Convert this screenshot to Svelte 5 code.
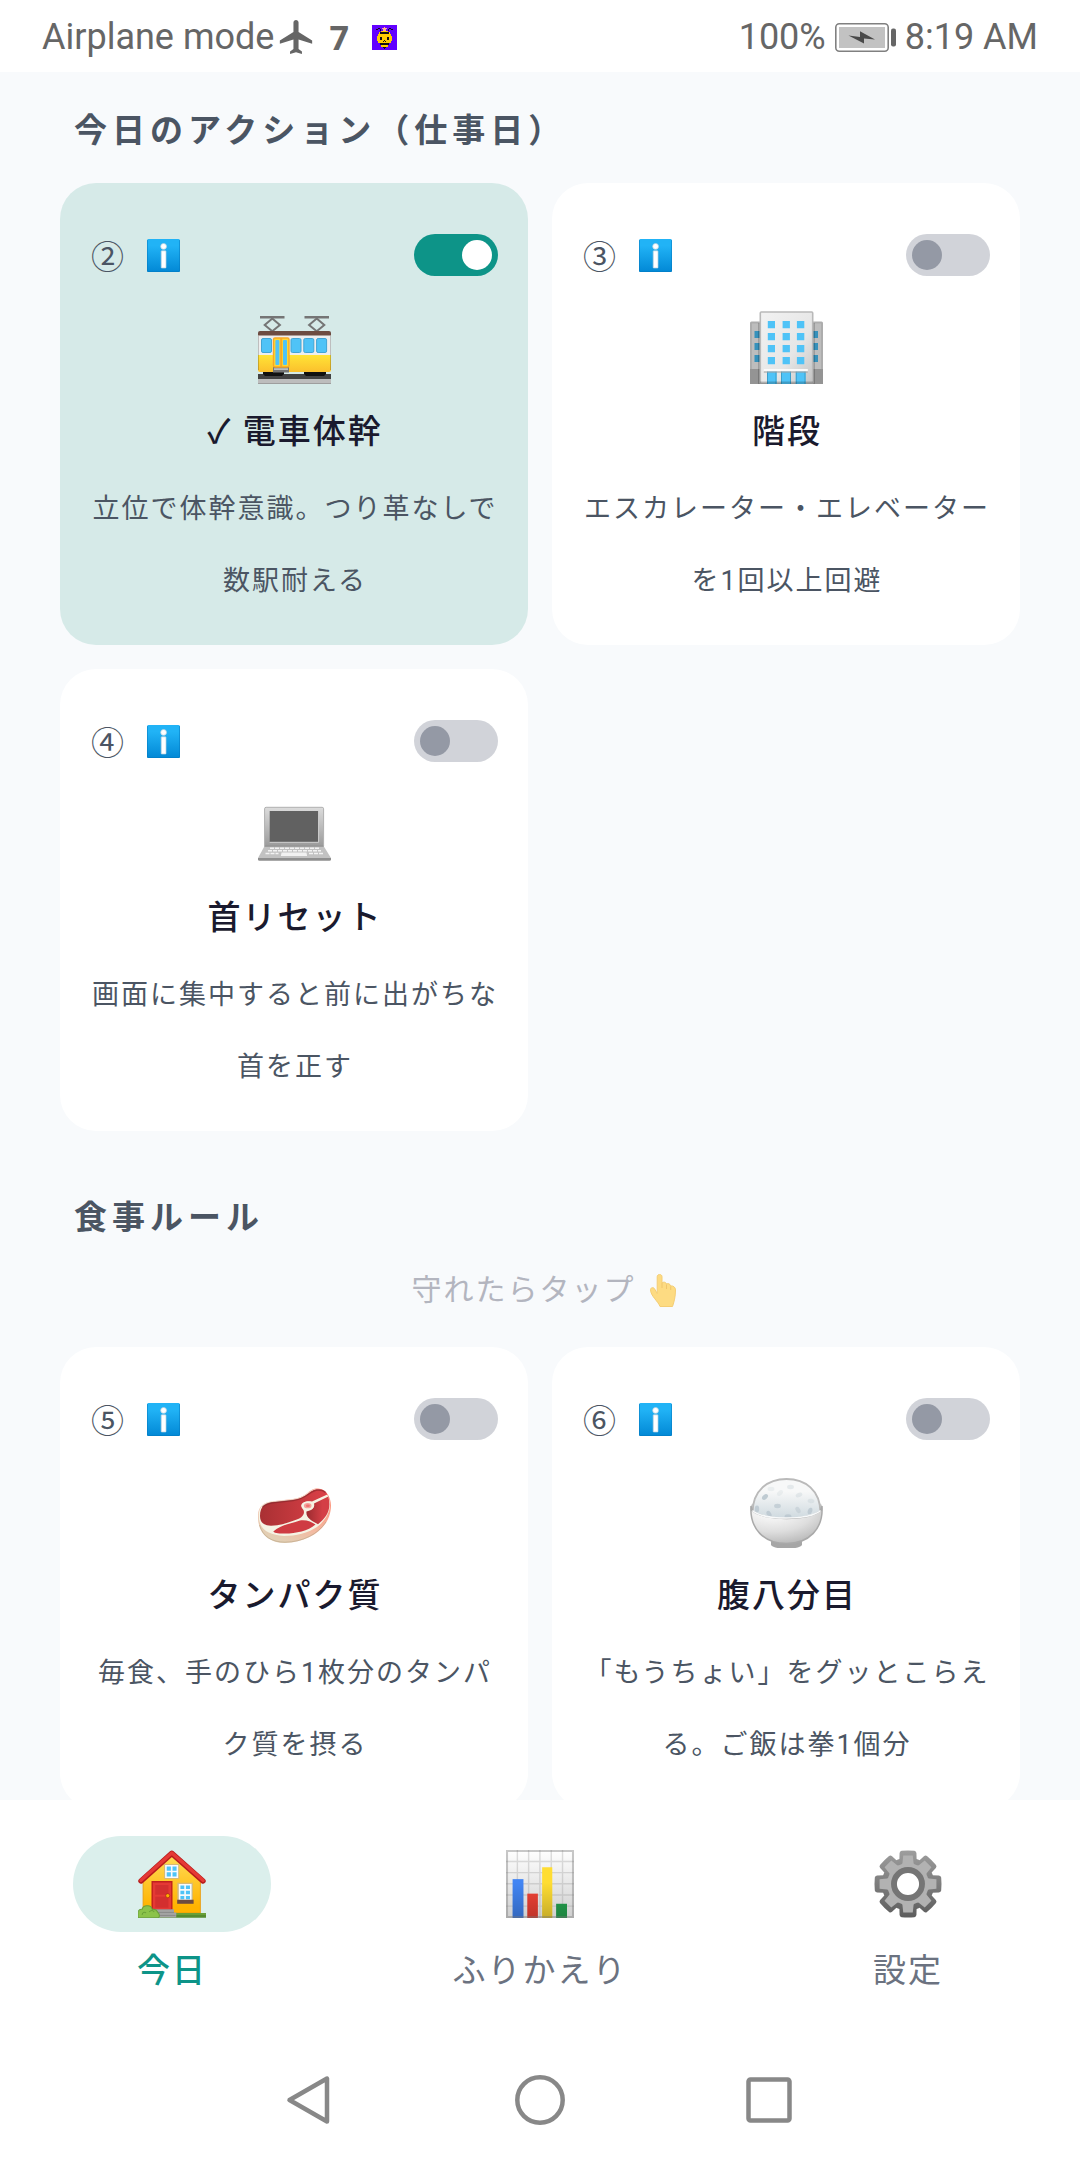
<script lang="ts">
	type Item = { no: string; icon: string; title: string; text: string; done: boolean };

	let actions = $state<Item[]>([
		{ no: '②', icon: 'train', title: '電車体幹', text: '立位で体幹意識。つり革なしで数駅耐える', done: true },
		{ no: '③', icon: 'building', title: '階段', text: 'エスカレーター・エレベーターを1回以上回避', done: false },
		{ no: '④', icon: 'laptop', title: '首リセット', text: '画面に集中すると前に出がちな首を正す', done: false }
	]);
	let meals = $state<Item[]>([
		{ no: '⑤', icon: 'meat', title: 'タンパク質', text: '毎食、手のひら1枚分のタンパク質を摂る', done: false },
		{ no: '⑥', icon: 'rice', title: '腹八分目', text: '「もうちょい」をグッとこらえる。ご飯は拳1個分', done: false }
	]);

	const tabs = [
		{ id: 'today', icon: 'house', label: '今日' },
		{ id: 'review', icon: 'chart', label: 'ふりかえり' },
		{ id: 'settings', icon: 'gear', label: '設定' }
	];
	let current = $state('today');

	// rice grains: x, y, rotation, opacity
	const grains = [
		[15, 22, -40, 0.9],
		[27.5, 31, 0, 0.7],
		[38, 41.5, 0, 0.8],
		[19, 39, 60, 0.8],
		[7, 34, 90, 0.8],
		[48, 35, 60, 0.5],
		[60, 36, -70, 0.8],
		[49, 20, -20, 0.3],
		[40.5, 12, 0, 0.3],
		[61, 26, 10, 0.3],
		[21, 14, 0, 0.2],
		[30, 18, -40, 0.2]
	];
	const teeth = [0, 45, 90, 135, 180, 225, 270, 315];
</script>

{#snippet icon(name: string)}
	{#if name === 'train'}
		<svg viewBox="0 0 73 73" aria-hidden="true">
			<defs>
				<linearGradient id="train-body" x2="0" y2="1">
					<stop offset="0" stop-color="#ffe436" />
					<stop offset="1" stop-color="#fbc02d" />
				</linearGradient>
			</defs>
			<g fill="none" stroke="#757575" stroke-width="2">
				<path d="M2 6.3h24.5M46.5 6.3H71" stroke-width="2.6" />
				<path d="M14.3 7.6l7.6 6.4-7.6 6.2L6.7 14zM58.7 7.6l7.6 6.4-7.6 6.2-7.6-6.2z" />
			</g>
			<path d="M0 63h73v5H0z" fill="#424242" />
			<path d="M0 68h73v5H0z" fill="#bdbdbd" />
			<path d="M0 72.5h73" stroke="#9e9e9e" />
			<path d="M5 60h21v3l-2 2H7l-2-2zM46 60h22v3l-2 2H48l-2-2z" fill="#111" />
			<path d="M0 24h73v21H0z" fill="#eee" />
			<path d="M0 44h73v15q0 2-2 2H2q-2 0-2-2z" fill="url(#train-body)" />
			<path d="M.5 25v34M72.5 25v34" stroke="#000" stroke-opacity=".2" />
			<path d="M0 24.5V22q0-2 2-2h69q2 0 2 2v2.5z" fill="#6d4c41" />
			<g fill="#4fc3f7" stroke="#42a5d5">
				<rect x="3.5" y="27.5" width="10" height="14" rx="1.5" />
				<rect x="33" y="27.5" width="10" height="14" rx="1.5" />
				<rect x="45.8" y="27.5" width="10" height="14" rx="1.5" />
				<rect x="58.6" y="27.5" width="10" height="14" rx="1.5" />
			</g>
			<path d="M15 55.5h16v6H15z" fill="#757575" />
			<path d="M16 57.2h14v1.8H16z" fill="#bdbdbd" />
			<rect x="15.5" y="27" width="15.5" height="29" rx="1.5" fill="#fdd835" stroke="#f9a825" stroke-width="1.4" />
			<path d="M23.2 27v29" stroke="#f9a825" stroke-width="2" />
			<rect x="17.4" y="29" width="4" height="25" rx="1" fill="#4fc3f7" />
			<rect x="25" y="29" width="4" height="25" rx="1" fill="#4fc3f7" />
		</svg>
	{:else if name === 'building'}
		<svg viewBox="0 0 73 73" aria-hidden="true">
			<defs>
				<linearGradient id="tower" x2="1" y2="1">
					<stop offset="0" stop-color="#f2f2f2" />
					<stop offset=".6" stop-color="#e6e6e6" />
					<stop offset="1" stop-color="#c4c4c4" />
				</linearGradient>
			</defs>
			<path d="M0 73V12q0-1.5 1.5-1.5h70q1.5 0 1.5 1.5v61z" fill="#adadad" />
			<path d="M2 58V12.5h8V58zM63 58V12.5h8V58z" fill="#bdbdbd" />
			<path d="M0 58h73v15H0z" fill="#949494" />
			<g fill="#3691bb">
				{#each [20, 32, 44] as y (y)}
					<path d="M4.5 {y}H10v7H4.5zM63 {y}h5v7h-5z" />
				{/each}
			</g>
			<path d="M8 12h2v61H8zM63 12h2v61h-2z" fill="#000" opacity=".18" />
			<rect x="10.3" y="1" width="52.4" height="71.6" rx="1" fill="url(#tower)" stroke="#b9b9b9" stroke-width="1.6" />
			<g fill="#4fc3f7">
				{#each [10, 22, 34, 46] as y (y)}
					<path d="M17.8 {y}H25v7.3h-7.2zM32.6 {y}h7.3v7.3h-7.3zM46.9 {y}h7.4v7.3h-7.4z" />
				{/each}
				<path d="M17 60h9.6v13H17zM31 60h10v13H31zM45.8 60h9.8v13h-9.8z" />
			</g>
			<path d="M17.5 60v13M26 60v13M31.5 60v13M40.5 60v13M46.3 60v13M55 60v13" stroke="#3b9fcb" />
			<path d="M10 70.6h53V73H10z" fill="#000" opacity=".2" />
			<path d="M13.8 58h44v2.6h-44z" fill="#fafafa" />
			<path d="M13.8 61h44" stroke="#9e9e9e" />
		</svg>
	{:else if name === 'laptop'}
		<svg viewBox="0 0 73 73" aria-hidden="true">
			<defs>
				<linearGradient id="lid" x2="0" y2="1">
					<stop offset="0" stop-color="#dcdcdc" />
					<stop offset="1" stop-color="#999" />
				</linearGradient>
			</defs>
			<rect x="6.6" y="10.3" width="59" height="40" rx="1.5" fill="url(#lid)" stroke="#b0b0b0" />
			<path d="M11.7 14h48.6v31H11.7z" fill="#616161" />
			<path d="M11.7 45.3h48.9V14" fill="none" stroke="#cfcfcf" />
			<path d="M6.6 49h59L73 61H0z" fill="#c2c2c2" />
			<path d="M6.6 49.2h59" stroke="#8d8d8d" />
			<path d="M12 51.3h49M10 53.8h53M7.5 56.6h13M51 56.6h14" stroke="#f3f3f3" stroke-width="1.5" stroke-dasharray="4 1" />
			<path d="M23.5 55.5h25l.6 3.5H22.9z" fill="#f1f1f1" />
			<path d="M0 61h73v1.5q0 1.2-1.5 1.2h-70Q0 63.7 0 62.5z" fill="#8f8f8f" />
		</svg>
	{:else if name === 'meat'}
		<svg viewBox="0 0 73 73" aria-hidden="true">
			<defs>
				<linearGradient id="fat" x1="1" y1="0" x2=".4" y2="1">
					<stop offset="0" stop-color="#ff8a73" />
					<stop offset=".6" stop-color="#f7b49c" />
					<stop offset="1" stop-color="#e3cfb4" />
				</linearGradient>
				<linearGradient id="flesh" x2="1" y2="0">
					<stop offset="0" stop-color="#a93033" />
					<stop offset="1" stop-color="#dc4148" />
				</linearGradient>
				<linearGradient id="flesh-dark" x2="1" y2="0">
					<stop offset="0" stop-color="#9c2b30" />
					<stop offset=".7" stop-color="#d43f46" />
				</linearGradient>
			</defs>
			<path d="M0 42C0 29 8 27 17 26l18-2c15-2 15-10.5 25-10.5 8 0 13 9 13 17C73 51 54 67 27 68 10 68 0 58 0 42z" fill="url(#fat)" />
			<path d="M1.5 50C5 62 14 67 27 67.2 45 67 60 59 68 47" fill="none" stroke="#b9a486" opacity=".6" />
			<path d="M.7 41C1 29 8 27 17 26.3l18-2C50 22 50 14 60 14c8 0 12 9 12 16 0 8-6 17-13 22-9 6-21 9-33 9C10 60 1 54 .7 41z" fill="#f5f3e4" />
			<path d="M2 41C2 30.5 8 27.6 17 27l18-2C50 23 51 14.3 60 14.3c5 0 8 2 9.3 5.200L54 26.500C49 25.500 43.500 27.500 43.500 31c0 2.500 2.500 3.500 2.500 6 0 4-4 7-10 8.500-8 3-15 5-23 5.200C6 50.700 2 47.500 2 41z" fill="url(#flesh)" />
			<path d="M4.500 32C8 28.300 12 28 17 27.500l18-2C50 23.500 52 15 60 15c4 0 6 1 7.500 2.500" fill="none" stroke="#7d2226" stroke-opacity=".55" stroke-width="1.4" />
			<path d="M70.300 21.500L56 28.500c1 4-2 7-7.500 8-.8 6 3.500 8.500 11.500 12.700C68 43 74 35 70.300 21.500z" fill="url(#flesh-dark)" />
			<path d="M15.300 56.500C22 50 32 49 42 45.500c6-1 12 1.500 15.500 4C50 56 38 58.500 27 58.500c-5 0-10 0-11.700-2z" fill="#cf3b42" />
			<ellipse cx="49.7" cy="30.7" rx="6.4" ry="4.2" fill="#f5f3e4" />
			<ellipse cx="49.7" cy="30.7" rx="3.8" ry="2.6" fill="#f5a19b" />
			<ellipse cx="49.9" cy="30.7" rx="2" ry="1.2" fill="#f0716f" />
		</svg>
	{:else if name === 'rice'}
		<svg viewBox="0 0 73 73" aria-hidden="true">
			<defs>
				<linearGradient id="dome" x2="0" y2="1">
					<stop offset=".3" stop-color="#f7f8f8" />
					<stop offset="1" stop-color="#cdd8de" />
				</linearGradient>
				<radialGradient id="bowl" cx=".3" cy=".1" r=".9">
					<stop offset=".1" stop-color="#fdfdfd" />
					<stop offset=".65" stop-color="#dedede" />
					<stop offset="1" stop-color="#bdbdbd" />
				</radialGradient>
			</defs>
			<path d="M21 66h31v4c-3 5-28 5-31 0z" fill="#a6a6a6" />
			<path d="M1 30l4-3 63 0 4 3-2 9H3z" fill="#d4d4d4" />
			<path d="M2.500 38C2.500 15 18 4 36.500 4S70.500 15 70.500 38C60 47 13 47 2.500 38z" fill="url(#dome)" stroke="#bababa" stroke-width="2" />
			{#each grains as [x, y, angle, opacity]}
				<ellipse cx={x} cy={y} rx="3.4" ry="2.2" fill="#b9c6ce" {opacity} transform="rotate({angle} {x} {y})" />
			{/each}
			<path d="M1 31C-.5 54 14 68.500 36.500 68.500S73.500 54 72 31l-1.500 4.500C60 46 13 46 2.500 35.500z" fill="url(#bowl)" stroke="#a9a9a9" stroke-width="1.5" />
			<path d="M2.500 35.500C13 45.500 60 45.500 70.500 35.500" fill="none" stroke="#f7f9fa" stroke-width="1.5" />
		</svg>
	{:else if name === 'house'}
		<svg viewBox="0 0 67 67" aria-hidden="true">
			<defs>
				<linearGradient id="wall" x2="0" y2="1">
					<stop offset=".1" stop-color="#ffd84f" />
					<stop offset=".9" stop-color="#ffb300" />
				</linearGradient>
			</defs>
			<path d="M5 62V30L33.300 4 61.500 30v32z" fill="url(#wall)" stroke="#e89a0c" stroke-width=".8" />
			<path d="M3 30.500L33.300 3.300 64 30.500" fill="none" stroke="#b71c1c" stroke-width="5.4" stroke-linecap="round" stroke-linejoin="round" />
			<path d="M3 29.800L33.300 3 64 29.800" fill="none" stroke="#e53935" stroke-width="3.4" stroke-linecap="round" stroke-linejoin="round" />
			<path d="M21 62h46v4.700H21z" fill="#558b2f" />
			<path d="M21 63h46" stroke="#7cb342" />
			<g fill="#4fc3f7" stroke="#fafafa" stroke-width="1.6">
				<path d="M26.500 14.500h13.300v13.300H26.500z" stroke="#d6b978" />
				<path d="M27.500 15.500h11.300v11.300H27.500zM33.200 15.500v11.300M27.500 21.200h11.300" />
				<path d="M39.500 33h13.800v16.500H39.500z" stroke="#d6b978" />
				<path d="M41 34.300h11v15H41zM46.400 34.300v15M41 39.300h11M41 44.500h11" />
			</g>
			<path d="M38.600 49h16.200v4H38.600z" fill="#6d4c41" />
			<path d="M14 31.300h19.300v27.500H14z" fill="#e53935" stroke="#c01f1f" stroke-width="1.4" />
			<path d="M17 34.500h13v9.500H17zM17 46h13v11H17z" fill="#d32f2f" />
			<circle cx="29.3" cy="45" r="2" fill="#ffb300" stroke="#a1230f" stroke-width=".6" />
			<path d="M15 58.500h20.500v3h2.200v5H15z" fill="#a3a3a3" />
			<path d="M15 61.500h20.500M15 64.500h22" stroke="#7f7f7f" stroke-width=".7" />
			<path d="M0 66.700V61q1-3 4-2.500 1-3.700 5-3.500 4-.5 5 3.500 4-.5 5.500 3 2.500 2 1 5.200z" fill="#8bc34a" stroke="#689f38" />
			<path d="M4 64q1-4 4-2M11 61q3-3 5 0" fill="none" stroke="#689f38" />
		</svg>
	{:else if name === 'chart'}
		<svg viewBox="0 0 67 67" aria-hidden="true">
			<defs>
				<linearGradient id="panel" x2="0" y2="1">
					<stop offset="0" stop-color="#fff" />
					<stop offset="1" stop-color="#cfcfcf" />
				</linearGradient>
				<linearGradient id="shade" x2="0" y2="1">
					<stop offset=".3" stop-opacity="0" />
					<stop offset="1" stop-opacity=".22" />
				</linearGradient>
			</defs>
			<path d="M0 0h67v67H0z" fill="url(#panel)" />
			<path d="M11.200 0v67M22.300 0v67M33.400 0v67M44.600 0v67M55.700 0v67M0 11.300h67M0 22.300h67M0 33.300h67M0 44.300h67M0 55.300h67" stroke="#9e9e9e" stroke-opacity=".35" stroke-width="1.4" />
			<path d="M6.500 28.700h10.700V67H6.500z" fill="#4285f4" />
			<path d="M21 43h10.400v24H21z" fill="#f44336" />
			<path d="M35.600 17h10v50h-10z" fill="#ffdd33" />
			<path d="M49.400 53h10.700v14H49.400z" fill="#26a852" />
			<path d="M6.500 28.700h10.700V67H6.500zM21 43h10.400v24H21zM35.600 17h10v50h-10zM49.400 53h10.700v14H49.400z" fill="url(#shade)" />
			<path d="M1 1h65v65H1z" fill="none" stroke="#757575" stroke-opacity=".4" stroke-width="2" />
		</svg>
	{:else if name === 'gear'}
		<svg viewBox="0 0 67 67" aria-hidden="true">
			<defs>
				<linearGradient id="rim" gradientUnits="userSpaceOnUse" x1="0" y1="0" x2="0" y2="67">
					<stop offset="0" stop-color="#9e9e9e" />
					<stop offset="1" stop-color="#5c5c5c" />
				</linearGradient>
				<mask id="teeth">
					<circle cx="33.5" cy="33.5" r="26" fill="#fff" />
					{#each teeth as angle (angle)}
						<path d="M23 14l2-4 .2-7q.3-2 2-2.200 6.300-.6 12.600 0 1.700.2 2 2.200l.2 7 2 4z" fill="#fff" transform="rotate({angle} 33.5 33.5)" />
					{/each}
				</mask>
			</defs>
			<path d="M0 0h67v67H0z" fill="url(#rim)" mask="url(#teeth)" />
			<g fill="#b2b2b2">
				<circle cx="33.5" cy="33.5" r="20.5" />
				{#each teeth as angle (angle)}
					<path d="M26 16l2-3 .8-7.500h9.400l.8 7.500 2 3z" transform="rotate({angle} 33.5 33.5)" />
				{/each}
			</g>
			<circle cx="33.5" cy="33.5" r="13.8" fill="#fff" stroke="#757575" stroke-width="5.8" />
		</svg>
	{/if}
{/snippet}

{#snippet cards(list: Item[])}
	<div class="grid">
		{#each list as item (item.no)}
			<article class="card" class:done={item.done}>
				<div class="card-top">
					<span class="no">{item.no}</span>
					<button class="info" aria-label="{item.title}の説明">
						<svg viewBox="0 0 33 33" aria-hidden="true">
							<defs>
								<linearGradient id="info-bg" x2="0" y2="1">
									<stop offset=".2" stop-color="#21b3f6" />
									<stop offset="1" stop-color="#0288d5" />
								</linearGradient>
							</defs>
							<rect width="33" height="33" rx="1.5" fill="url(#info-bg)" />
							<path d="M.5 1v31.500h32V1" fill="none" stroke="#0277bd" stroke-opacity=".5" />
							<g fill="#fff" stroke="#b5cfdd" stroke-width=".7">
								<circle cx="16.6" cy="7.4" r="2.9" />
								<rect x="14.2" y="11.8" width="4.8" height="17.2" rx=".6" />
							</g>
						</svg>
					</button>
					<input class="switch" type="checkbox" aria-label={item.title} bind:checked={item.done} />
				</div>
				<div class="picture">{@render icon(item.icon)}</div>
				<h3>{item.done ? '✓ ' : ''}{item.title}</h3>
				<p>{item.text}</p>
			</article>
		{/each}
	</div>
{/snippet}

<div class="app">
	<header class="status">
		<span>Airplane mode</span>
		<svg class="plane" viewBox="2 2 19 20" aria-hidden="true">
			<path d="M21 16v-2l-8-5V3.500C13 2.670 12.330 2 11.500 2S10 2.670 10 3.500V9l-8 5v2l8-2.500V19l-2 1.500V22l3.500-1 3.500 1v-1.500L13 19v-5.500z" fill="#666" />
		</svg>
		<b>7</b>
		<svg class="bee" viewBox="0 0 25 25" shape-rendering="crispEdges" aria-hidden="true">
			<path d="M0 0h25v25H0z" fill="#6200ff" />
			<path d="M4 4h2v1H4zM6 3h2v1H6zM8 4h1v2H8zM19 4h2v1h-2zM17 3h2v1h-2zM16 4h1v2h-1z" fill="#111" />
			<path d="M12 2h1v1h2v1h-1v2h-3V4h-1V3h2z" fill="#ffb38a" />
			<path d="M9 6h7v1h2v2h1v2h1v5h-1v2h-2v2h-1v2h-7v-2H8v-2H6v-2H5v-5h1V9h1V7h2z" fill="#fc0" />
			<path d="M8 7h9v2H8zM8 12h2v3H8zM15 12h2v3h-2zM12 15h1v1h-1zM11 16h1v1h-1zM13 16h1v1h-1zM8 18h9v2H8zM11 22h3v1h-1v1h-1v-1h-1z" fill="#111" />
		</svg>
		<span class="right">100%</span>
		<svg class="battery" viewBox="0 0 61 29" aria-hidden="true">
			<rect x=".8" y=".8" width="52.4" height="27.4" rx="3.5" fill="none" stroke="#808080" stroke-width="1.6" />
			<path d="M4 4h46v21H4z" fill="#c2c2c2" />
			<path d="M13.500 12.500L25 14V8.300L40 16.500 29 15.500v5z" fill="#4a4a4a" />
			<rect x="56" y="5.5" width="5" height="18" rx="2" fill="#666" />
		</svg>
		<span>8:19 AM</span>
	</header>

	<main>
		<h2>今日のアクション（仕事日）</h2>
		{@render cards(actions)}
		<h2 class="next">食事ルール</h2>
		<p class="hint">
			守れたらタップ
			<svg viewBox="0 0 26 33" aria-hidden="true">
				<path d="M7.200 2.800C7.200-.4 12 -.4 12 2.800V9c1-1.500 4-1 4.500 1 1.500-1 4 0 4 2 2.500-.5 5 1 5 4 0 7-1.500 12-3 16.500H10C8 27 .5 22 .5 15.500 1 13 4 13 5 15.500l2.200 4z" fill="#fddb82" stroke="#f4cd74" />
				<path d="M12 9v5M16.500 10.500V15M20.700 12.500V16" stroke="#efc56c" />
			</svg>
		</p>
		{@render cards(meals)}
	</main>

	<nav class="tabs">
		{#each tabs as tab (tab.id)}
			<button class="tab" class:active={current === tab.id} onclick={() => (current = tab.id)}>
				<span class="pill">{@render icon(tab.icon)}</span>
				<span class="label">{tab.label}</span>
			</button>
		{/each}
	</nav>

	<footer class="system">
		<button aria-label="戻る">
			<svg viewBox="0 0 50 50" aria-hidden="true"><path d="M41 3.500v43L3.500 25z" /></svg>
		</button>
		<button aria-label="ホーム">
			<svg viewBox="0 0 50 50" aria-hidden="true"><circle cx="25" cy="25" r="22.7" /></svg>
		</button>
		<button aria-label="アプリ履歴">
			<svg viewBox="0 0 50 50" aria-hidden="true"><rect x="4.5" y="4.5" width="41" height="41" rx="2" /></svg>
		</button>
	</footer>
</div>

<style>
	:global(body) {
		margin: 0;
	}
	.app {
		display: flex;
		flex-direction: column;
		height: 100vh;
		background: #fff;
		color: #4b5563;
		font-family: Roboto, 'Noto Sans CJK JP', sans-serif;
	}
	svg {
		display: block;
	}
	button {
		padding: 0;
		border: 0;
		background: none;
		font: inherit;
		cursor: pointer;
	}

	/* status bar */
	.status {
		display: flex;
		align-items: center;
		flex: none;
		height: 72px;
		padding: 2px 42px 0;
		box-sizing: border-box;
		font-size: 36px;
		color: #666;
	}
	.plane {
		width: 34px;
		height: 34px;
		margin-left: 5px;
	}
	.status b {
		margin-left: 16px;
		font-family: 'Open Sans', sans-serif;
		font-size: 34px;
	}
	.bee {
		width: 25px;
		height: 25px;
		margin-left: 23px;
	}
	.right {
		margin-left: auto;
	}
	.battery {
		width: 61px;
		height: 29px;
		margin: 0 9px;
	}

	main {
		flex: 1;
		min-height: 0;
		overflow: hidden;
		padding: 29px 60px 0;
		background: #f8fafc;
	}
	h2 {
		margin: 0 0 22px;
		padding-left: 14px;
		font-size: 33px;
		font-weight: 700;
		line-height: 60px;
		letter-spacing: 5px;
	}
	h2.next {
		margin: 57px 0 18px;
	}
	.hint {
		display: flex;
		align-items: center;
		justify-content: center;
		gap: 14px;
		margin: 0 0 33px;
		padding-left: 7px;
		font-size: 30px;
		line-height: 48px;
		letter-spacing: 2px;
		color: #b3b5bf;
	}
	.hint svg {
		width: 26px;
		height: 33px;
	}

	/* cards */
	.grid {
		display: grid;
		grid-template-columns: 1fr 1fr;
		gap: 24px;
	}
	.card {
		padding: 30px 30px 28px;
		border-radius: 36px;
		background: #fff;
		text-align: center;
	}
	.card.done {
		background: #d6eae8;
	}
	.card-top {
		display: flex;
		align-items: center;
		height: 84px;
	}
	.no {
		width: 35px;
		font-size: 33px;
	}
	.info {
		margin-left: 22px;
	}
	.info svg {
		width: 33px;
		height: 33px;
	}
	.switch {
		appearance: none;
		width: 84px;
		height: 42px;
		margin: 0 0 0 auto;
		padding: 6px;
		border-radius: 21px;
		background: #d1d3d9;
	}
	.switch::before {
		content: '';
		display: block;
		width: 30px;
		height: 30px;
		border-radius: 50%;
		background: #9499a5;
	}
	.switch:checked {
		background: #0d9488;
	}
	.switch:checked::before {
		margin-left: auto;
		background: #fff;
	}
	.picture {
		width: 73px;
		height: 73px;
		margin: 14px auto 12px;
	}
	h3 {
		margin: 0 0 5px;
		padding-left: 2px;
		font-size: 33px;
		font-weight: 500;
		line-height: 72px;
		letter-spacing: 2px;
		color: #1a1a2e;
	}
	.card p {
		margin: 0;
		padding-left: 2px;
		font-size: 27px;
		line-height: 72px;
		letter-spacing: 2px;
	}

	/* bottom tabs */
	.tabs {
		display: flex;
		justify-content: space-between;
		padding: 36px 73px 45px;
	}
	.tab {
		width: 198px;
		color: #6b7280;
	}
	.pill {
		display: flex;
		align-items: center;
		justify-content: center;
		height: 96px;
		margin-bottom: 15px;
		border-radius: 48px;
	}
	.pill :global(svg) {
		width: 68px;
		height: 68px;
	}
	.label {
		display: block;
		font-size: 33px;
		line-height: 48px;
		letter-spacing: 2px;
		white-space: nowrap;
	}
	.tab.active {
		color: #0d9488;
		font-weight: 500;
	}
	.tab.active .pill {
		background: #dbefec;
	}

	.system {
		display: flex;
		align-items: center;
		justify-content: center;
		gap: 179px;
		flex: none;
		height: 120px;
	}
	.system svg {
		width: 50px;
		height: 50px;
		fill: none;
		stroke: #888;
		stroke-width: 4.5px;
		stroke-linejoin: round;
	}
</style>
